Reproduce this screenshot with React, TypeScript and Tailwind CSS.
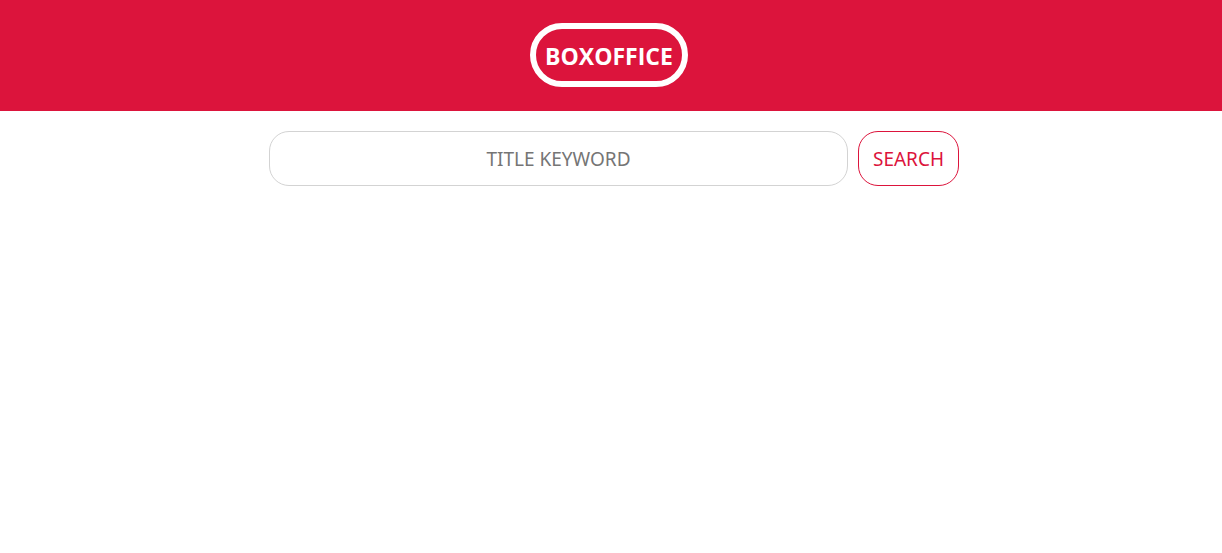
export default function App() {
  return (
    <div className="font-['Open_Sans','Noto_Sans',sans-serif]">
      <header className="flex justify-center bg-[#dc143c] pt-[23px] pb-6 pr-1">
        <h1 className="flex h-16 items-center rounded-full border-6 border-white px-[9px] pt-0.5 text-[23px] leading-8 font-bold text-white">
          BOXOFFICE
        </h1>
      </header>
      <main className="pt-5 pl-1.5 font-['Noto_Sans',sans-serif]">
        <form className="mx-auto flex w-full max-w-[690px] gap-2.5" onSubmit={(e) => e.preventDefault()}>
          <input
            type="text"
            aria-label="Title keyword"
            placeholder="TITLE KEYWORD"
            className="h-[55px] min-w-0 flex-1 rounded-[20px] border border-[#d3d3d3] bg-white px-3 text-center text-[19px] leading-7 text-black placeholder:text-[#757575]"
          />
          <button type="submit" className="h-[55px] rounded-[20px] border border-[#dc143c] bg-white px-3.5 text-[19px] leading-7 text-[#dc143c]">
            SEARCH
          </button>
        </form>
      </main>
    </div>
  );
}
